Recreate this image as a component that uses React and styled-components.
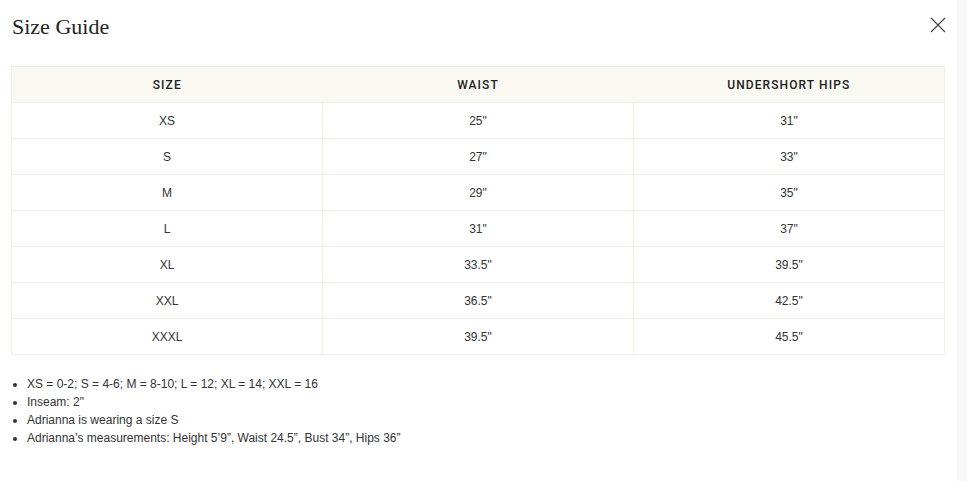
import React from 'react'
import styled, { createGlobalStyle } from 'styled-components'

const GlobalStyle = createGlobalStyle`
    html, body {
        margin: 0;
        padding: 0;
        background: #f7f7f7;
    }
    body {
        font-family: "Liberation Sans", Arial, sans-serif;
    }
`

const Modal = styled.div`
    width: 957px;
    height: 481px;
    background: #fff;
    box-sizing: border-box;
    padding: 12px 13px 0 11px;
`

const Header = styled.div`
    display: flex;
    justify-content: space-between;
    align-items: flex-start;
    height: 54px;
`

const Title = styled.h2`
    margin: 0;
    padding-left: 1px;
    font-family: "Liberation Serif", "Times New Roman", serif;
    font-weight: 400;
    font-size: 22px;
    line-height: 30px;
    color: #222;
`

const CloseButton = styled.button`
    border: 0;
    background: none;
    padding: 0;
    margin: 4px -3px 0 0;
    width: 18px;
    height: 18px;
    cursor: pointer;
    display: flex;
    align-items: center;
    justify-content: center;
`

const Table = styled.table`
    width: 934px;
    border-collapse: collapse;
    border: 1px solid #f1eee3;
    table-layout: fixed;
`

const HeadCell = styled.th`
    height: 35px;
    padding: 0;
    background: #faf8f3;
    font-family: Roboto, "Liberation Sans", sans-serif;
    font-size: 12px;
    font-weight: 500;
    letter-spacing: 1.1px;
    color: #222;
    text-align: center;
`

const Cell = styled.td`
    height: 35px;
    padding: 0;
    border-top: 1px solid #f1eee3;
    border-left: ${p => (p.first ? 'none' : '1px solid #f1eee3')};
    font-size: 12px;
    color: #333;
    text-align: center;
`

const Notes = styled.ul`
    margin: 20px 0 0;
    padding-left: 16px;
    font-size: 12px;
    line-height: 18px;
    color: #333;
`

const rows = [
    ['XS', '25"', '31"'],
    ['S', '27"', '33"'],
    ['M', '29"', '35"'],
    ['L', '31"', '37"'],
    ['XL', '33.5"', '39.5"'],
    ['XXL', '36.5"', '42.5"'],
    ['XXXL', '39.5"', '45.5"'],
]

const notes = [
    'XS = 0-2; S = 4-6; M = 8-10; L = 12; XL = 14; XXL = 16',
    'Inseam: 2"',
    'Adrianna is wearing a size S',
    'Adrianna\u2019s measurements: Height 5\u20199\u201D, Waist 24.5\u201D, Bust 34\u201D, Hips 36\u201D',
]

export default function App() {
    return (
        <>
            <GlobalStyle />
            <Modal>
                <Header>
                    <Title>Size Guide</Title>
                    <CloseButton aria-label="Close">
                        <svg width="16" height="16" viewBox="0 0 16 16">
                            <path d="M1 1L15 15M15 1L1 15" stroke="#444" strokeWidth="1.2" fill="none" />
                        </svg>
                    </CloseButton>
                </Header>
                <Table>
                    <thead>
                        <tr>
                            <HeadCell>SIZE</HeadCell>
                            <HeadCell>WAIST</HeadCell>
                            <HeadCell>UNDERSHORT HIPS</HeadCell>
                        </tr>
                    </thead>
                    <tbody>
                        {rows.map(r => (
                            <tr key={r[0]}>
                                {r.map((v, i) => (
                                    <Cell key={i} first={i === 0}>{v}</Cell>
                                ))}
                            </tr>
                        ))}
                    </tbody>
                </Table>
                <Notes>
                    {notes.map(n => <li key={n}>{n}</li>)}
                </Notes>
            </Modal>
        </>
    )
}
